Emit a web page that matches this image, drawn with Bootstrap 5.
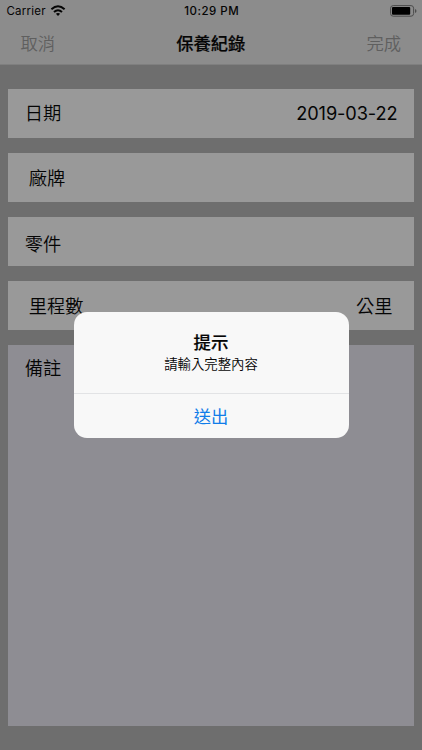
<!DOCTYPE html>
<html lang="zh-Hant">
<head>
<meta charset="utf-8">
<meta name="viewport" content="width=device-width, initial-scale=1">
<title>保養紀錄</title>
<link href="https://cdn.jsdelivr.net/npm/bootstrap@5.3.0/dist/css/bootstrap.min.css" rel="stylesheet">
<style>
body{font-family:Inter,"Noto Sans CJK TC",sans-serif;background:#6e6e6e;color:#050505;line-height:1}
.screen{height:750px}
.topbar{height:65px;background:#8c8c8c;border-bottom:1px solid #7f7f7f}
.status{height:22px;font-size:11.5px;padding:0 5px 0 6.5px}
.carrier{letter-spacing:.22px;padding-top:2px}
.clock{font-size:11.5px;font-weight:550;letter-spacing:.5px;padding-top:2px}
.titlebar{height:43px;font-size:17.3px;padding:0 21px 0 20.5px}
.titlebar .action{color:#5f5f5f;font-weight:350;padding-top:1px}
.semi{font-weight:500;-webkit-text-stroke:.2px currentColor}
.form-area{padding:24px 8.5px 24px 8.4px;gap:15.1px}
.field{height:49px;background:#999;font-size:18.3px;font-weight:350;padding:0 16px 0 16.4px}
.field .inset{padding-left:4px}
.field .unit{padding-right:5px}
.brand-field{padding-top:1px}
.date{font-size:18.2px;font-weight:400;letter-spacing:-.1px}
.notes{background:#8e8d93;font-size:18.3px;font-weight:350;padding:14px 16.4px}
.alert-box{width:275px;height:126px;left:73.5px;top:312px;background:#f8f8f8;border-radius:13px}
.alert-text{height:82px;border-bottom:1px solid #e2e3e5;padding-top:21px}
.alert-title{font-size:17.4px;line-height:20px}
.alert-message{font-size:13.4px;font-weight:350;line-height:18px;margin-top:2px}
.alert-action{font-size:17.3px;font-weight:400;color:#117de9;padding-top:2px}
</style>
<script src="https://cdn.jsdelivr.net/npm/bootstrap@5.3.0/dist/js/bootstrap.bundle.min.js"></script>
</head>
<body>
<div class="screen position-relative d-flex flex-column overflow-hidden">
  <header class="topbar flex-shrink-0">
    <div class="status row g-0 align-items-center">
      <div class="col d-flex align-items-center gap-1"><span class="carrier">Carrier</span>
        <svg width="16" height="12" viewBox="0 0 16 12" fill="none" stroke="#050505"><path d="M1.4 4.2Q8-1.6 14.6 4.2" stroke-width="2"/><path d="M4 7Q8 3.4 12 7" stroke-width="2"/><path d="M5.9 8.8Q8 7.1 10.1 8.8L8 11Z" fill="#050505" stroke="none"/></svg>
      </div>
      <div class="clock col-auto">10:29 PM</div>
      <div class="col d-flex justify-content-end">
        <svg width="27" height="12" viewBox="0 0 27 12"><rect x=".6" y=".6" width="23" height="10.6" rx="2.6" fill="none" stroke="#4c4c4c"/><rect x="2" y="2" width="18.2" height="7.8" rx="1" fill="#000"/><path d="M25 4v4q1.5-.5 1.5-2T25 4Z" fill="#4c4c4c"/></svg>
      </div>
    </div>
    <div class="titlebar d-flex justify-content-between align-items-center">
      <span class="action">取消</span><span class="semi">保養紀錄</span><span class="action">完成</span>
    </div>
  </header>
  <main class="form-area flex-grow-1 d-flex flex-column">
    <div class="field d-flex justify-content-between align-items-center flex-shrink-0"><span>日期</span><span class="date">2019-03-22</span></div>
    <div class="field brand-field d-flex align-items-center flex-shrink-0"><span class="inset">廠牌</span></div>
    <div class="field d-flex align-items-center flex-shrink-0 pt-1"><span>零件</span></div>
    <div class="field d-flex justify-content-between align-items-center flex-shrink-0"><span class="inset">里程數</span><span class="unit">公里</span></div>
    <div class="notes flex-grow-1">備註</div>
  </main>
  <div class="alert-box position-absolute d-flex flex-column text-center overflow-hidden" role="dialog">
    <div class="alert-text"><div class="alert-title semi">提示</div><div class="alert-message">請輸入完整內容</div></div>
    <div class="alert-action flex-grow-1 d-flex align-items-center justify-content-center">送出</div>
  </div>
</div>
</body>
</html>
